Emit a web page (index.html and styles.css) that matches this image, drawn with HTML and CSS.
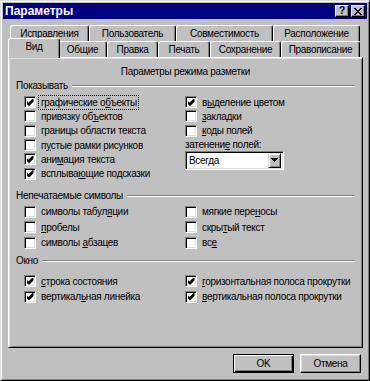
FILE: index.html
```html
<!DOCTYPE html>
<html lang="ru">
<head>
  <meta charset="UTF-8">
  <title>Параметры</title>
  <link rel="stylesheet" href="styles.css">
</head>
<body>
  <div class="window">
    <div class="titlebar">
      <span class="title">Параметры</span>
      <div class="caption-btns">
        <span class="cbtn">?</span>
        <span class="cbtn close">
          <svg width="8" height="7" viewBox="0 0 8 7" shape-rendering="crispEdges"><path d="M0 0h2v1h-2zM6 0h2v1h-2zM1 1h2v1h-2zM5 1h2v1h-2zM2 2h4v1h-4zM3 3h2v1h-2zM2 4h4v1h-4zM1 5h2v1h-2zM5 5h2v1h-2zM0 6h2v1h-2zM6 6h2v1h-2z" fill="#000"/></svg>
        </span>
      </div>
    </div>

    <div class="tabs">
      <div class="tab-row">
        <div class="tab w79">Исправления</div>
        <div class="tab w87">Пользователь</div>
        <div class="tab w97">Совместимость</div>
        <div class="tab w87">Расположение</div>
      </div>
      <div class="tab-row">
        <div class="tab active w48">Вид</div>
        <div class="tab w49">Общие</div>
        <div class="tab w51">Правка</div>
        <div class="tab w52">Печать</div>
        <div class="tab w71">Сохранение</div>
        <div class="tab w79">Правописание</div>
      </div>
    </div>

    <div class="panel">
      <div class="heading">Параметры режима разметки</div>

      <div class="group">
        <div class="group-head"><span>Показывать</span><i class="etch"></i></div>
        <div class="cols first">
          <div class="col">
            <div class="row r14"><span class="box on"></span><span class="lbl focus">графические о<u>б</u>ъекты</span></div>
            <div class="row r14"><span class="box"></span><span class="lbl">привязку об<u>ъ</u>ектов</span></div>
            <div class="row r14"><span class="box"></span><span class="lbl">границы области текста</span></div>
            <div class="row r14"><span class="box"></span><span class="lbl">п<u>у</u>стые рамки рисунков</span></div>
            <div class="row r14"><span class="box on"></span><span class="lbl">ани<u>м</u>ация текста</span></div>
            <div class="row r14"><span class="box on"></span><span class="lbl">всплыва<u>ю</u>щие подсказки</span></div>
          </div>
          <div class="col">
            <div class="row r14"><span class="box on"></span><span class="lbl">в<u>ы</u>деление цветом</span></div>
            <div class="row r14"><span class="box"></span><span class="lbl"><u>з</u>акладки</span></div>
            <div class="row r14"><span class="box"></span><span class="lbl"><u>к</u>оды полей</span></div>
            <div class="field-label">затенени<u>е</u> полей:</div>
            <div class="combo">
              <span class="combo-value">Всегда</span>
              <span class="combo-btn">
                <svg width="7" height="4" viewBox="0 0 7 4" shape-rendering="crispEdges"><path d="M0 0h7v1h-1v1h-1v1h-1v1h-1v-1h-1v-1h-1v-1h-1z" fill="#000"/></svg>
              </span>
            </div>
          </div>
        </div>
      </div>

      <div class="group second">
        <div class="group-head"><span>Непечатаемые символы</span><i class="etch"></i></div>
        <div class="cols">
          <div class="col">
            <div class="row r15"><span class="box"></span><span class="lbl">символы табул<u>я</u>ции</span></div>
            <div class="row r15"><span class="box"></span><span class="lbl"><u>п</u>робелы</span></div>
            <div class="row r15"><span class="box"></span><span class="lbl">символы <u>а</u>бзацев</span></div>
          </div>
          <div class="col">
            <div class="row r15"><span class="box"></span><span class="lbl">мягкие пере<u>н</u>осы</span></div>
            <div class="row r15"><span class="box"></span><span class="lbl">скры<u>т</u>ый текст</span></div>
            <div class="row r15"><span class="box"></span><span class="lbl">вс<u>е</u></span></div>
          </div>
        </div>
      </div>

      <div class="group third">
        <div class="group-head"><span>Окно</span><i class="etch"></i></div>
        <div class="cols roomy">
          <div class="col">
            <div class="row r15"><span class="box on"></span><span class="lbl"><u>с</u>трока состояния</span></div>
            <div class="row r15"><span class="box on"></span><span class="lbl">вертикал<u>ь</u>ная линейка</span></div>
          </div>
          <div class="col">
            <div class="row r15"><span class="box on"></span><span class="lbl"><u>г</u>оризонтальная полоса прокрутки</span></div>
            <div class="row r15"><span class="box on"></span><span class="lbl"><u>в</u>ертикальная полоса прокрутки</span></div>
          </div>
        </div>
      </div>
    </div>

    <div class="actions">
      <button class="btn default">OK</button>
      <button class="btn">Отмена</button>
    </div>
  </div>
</body>
</html>
```

FILE: styles.css
```css
body {
  margin: 0;
  background: #c0c0c0;
  font-family: 'Liberation Sans', Arial, sans-serif;
  font-size: 10px;
  letter-spacing: -0.3px;
  color: #000;
}

.window {
  width: 370px;
  height: 381px;
  box-sizing: border-box;
  padding: 2px;
  background: #c0c0c0;
  border: 1px solid;
  border-color: #dfdfdf #000 #000 #dfdfdf;
  box-shadow: inset 1px 1px #fff, inset -1px -1px #808080;
  display: flex;
  flex-direction: column;
}

/* title bar */
.titlebar {
  height: 16px;
  background: #000080;
  display: flex;
  align-items: center;
  justify-content: space-between;
  padding: 0 2px;
}

.title {
  color: #fff;
  font-weight: bold;
  font-size: 12px;
  letter-spacing: 0;
}

.caption-btns {
  display: flex;
  gap: 2px;
}

.cbtn {
  width: 14px;
  height: 12px;
  box-sizing: border-box;
  background: #c0c0c0;
  border: 1px solid;
  border-color: #fff #000 #000 #fff;
  box-shadow: inset -1px -1px #808080;
  display: flex;
  align-items: center;
  justify-content: center;
  font-weight: bold;
  font-size: 10px;
  line-height: 1;
}

/* tabs */
.tabs {
  margin: 6px 0 0 5px;
  width: 355px;
}

.tab-row {
  display: flex;
  align-items: flex-start;
  padding-left: 2px;
  height: 16px;
}

.tab {
  height: 16px;
  box-sizing: border-box;
  border: 1px solid;
  border-bottom: none;
  border-color: #fff #000 #000 #fff;
  border-radius: 3px 3px 0 0;
  box-shadow: inset -1px 0 #808080;
  background: #c0c0c0;
  text-align: center;
  line-height: 15px;
  white-space: nowrap;
}

.tab.active {
  height: 20px;
  margin: -3px -2px -1px -2px;
  position: relative;
  z-index: 1;
  line-height: 16px;
}

.w48 { width: 48px; }
.w49 { width: 49px; }
.w51 { width: 51px; }
.w52 { width: 52px; }
.w71 { width: 71px; }
.w79 { width: 79px; }
.w87 { width: 87px; }
.w97 { width: 97px; }
.tab.active.w48 { width: 52px; }

/* panel */
.panel {
  width: 355px;
  height: 291px;
  margin-left: 5px;
  box-sizing: border-box;
  border: 1px solid;
  border-color: #fff #000 #000 #fff;
  box-shadow: inset 1px 1px #dfdfdf, inset -1px -1px #808080;
  padding: 8px 7px 0;
}

.heading {
  text-align: center;
  line-height: 12px;
}

.group-head {
  display: flex;
  align-items: center;
  gap: 4px;
  line-height: 12px;
  margin-top: 2px;
}

.etch {
  flex: 1;
  height: 1px;
  background: #808080;
  border-bottom: 1px solid #fff;
}

.cols {
  display: grid;
  grid-template-columns: 161px 1fr;
  padding-left: 8px;
  margin-top: 3px;
}

.second { margin-top: 9px; }
.second .cols { margin-top: 2px; }
.third { margin-top: 5px; }
.cols.roomy { margin-top: 6px; }

.row {
  display: flex;
  align-items: center;
  gap: 5px;
  white-space: nowrap;
}

.r14 { height: 14.3px; }
.r15 { height: 15.5px; }

.box {
  width: 12px;
  height: 12px;
  box-sizing: border-box;
  flex: none;
  background: #fff;
  border: 1px solid;
  border-color: #808080 #fff #fff #808080;
  box-shadow: inset 1px 1px #000, inset -1px -1px #dfdfdf;
  display: flex;
  align-items: center;
  justify-content: center;
}

.box.on::after {
  content: "";
  width: 7px;
  height: 7px;
  background: #000;
  clip-path: polygon(0 28%, 28% 57%, 86% 0, 100% 0, 100% 43%, 43% 100%, 28% 100%, 0 72%);
}

.lbl {
  line-height: 11px;
}

.lbl.focus {
  outline: 1px dotted #000;
  outline-offset: 1px;
  margin-left: -1px;
  padding-left: 1px;
}

u {
  text-underline-offset: 1px;
}

.field-label {
  line-height: 14px;
  height: 14px;
}

.combo {
  width: 99px;
  height: 19px;
  margin-top: -1px;
  box-sizing: border-box;
  background: #fff;
  border: 1px solid;
  border-color: #808080 #fff #fff #808080;
  box-shadow: inset 1px 1px #000, inset -1px -1px #dfdfdf;
  display: flex;
  align-items: center;
  justify-content: space-between;
  padding: 2px;
}

.combo-value {
  padding-left: 1px;
}

.combo-btn {
  width: 13px;
  height: 15px;
  box-sizing: border-box;
  background: #c0c0c0;
  border: 1px solid;
  border-color: #dfdfdf #000 #000 #dfdfdf;
  box-shadow: inset 1px 1px #fff, inset -1px -1px #808080;
  display: flex;
  align-items: center;
  justify-content: center;
}

/* dialog buttons */
.actions {
  display: flex;
  justify-content: flex-end;
  gap: 6px;
  margin: 6px 6px 0 0;
}

.btn {
  width: 61px;
  height: 19px;
  box-sizing: border-box;
  font: inherit;
  letter-spacing: inherit;
  background: #c0c0c0;
  border: 1px solid;
  border-color: #fff #000 #000 #fff;
  box-shadow: inset -1px -1px #808080, inset 1px 1px #dfdfdf;
  padding: 0;
}

.btn.default {
  border-color: #000;
  box-shadow: inset 1px 1px #fff, inset -1px -1px #000, inset -2px -2px #808080;
}
```
